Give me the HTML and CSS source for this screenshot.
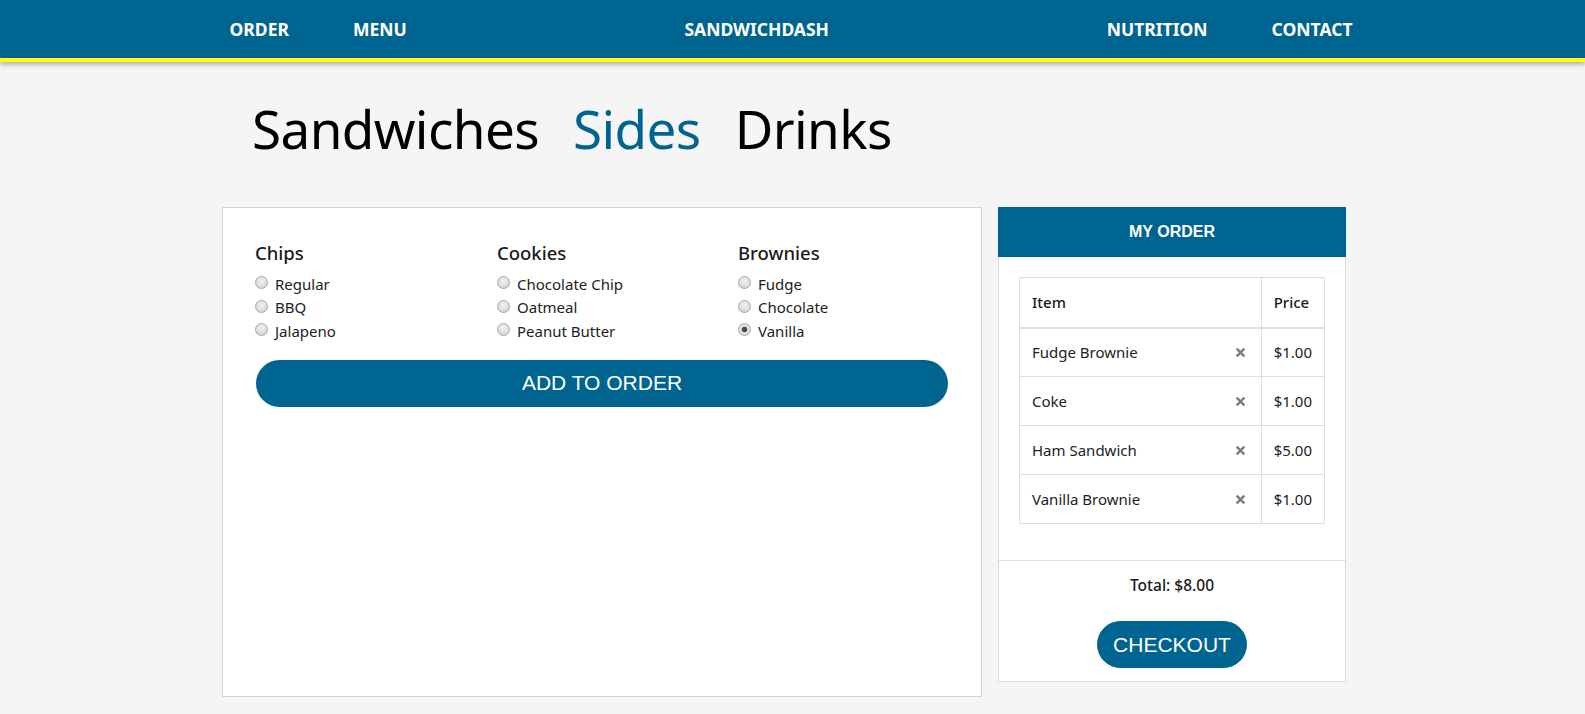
FILE: index.html
```html
<!DOCTYPE html>
<html lang="en">
<head>
<meta charset="utf-8">
<title>SandwichDash</title>
<link rel="stylesheet" href="styles.css">
</head>
<body>
<header class="topbar">
  <nav class="nav">
    <div class="nav-group">
      <a class="nav-link" href="#">ORDER</a>
      <a class="nav-link" href="#">MENU</a>
    </div>
    <div class="brand">SANDWICHDASH</div>
    <div class="nav-group">
      <a class="nav-link" href="#">NUTRITION</a>
      <a class="nav-link" href="#">CONTACT</a>
    </div>
  </nav>
</header>

<main class="page">
  <div class="tabs">
    <span class="tab">Sandwiches</span>
    <span class="tab tab-active">Sides</span>
    <span class="tab">Drinks</span>
  </div>

  <div class="content">
    <section class="menu-panel">
      <div class="options">
        <div class="group">
          <h3 class="group-title">Chips</h3>
          <label class="opt"><input class="radio" type="radio" name="chips">Regular</label>
          <label class="opt"><input class="radio" type="radio" name="chips">BBQ</label>
          <label class="opt"><input class="radio" type="radio" name="chips">Jalapeno</label>
        </div>
        <div class="group">
          <h3 class="group-title">Cookies</h3>
          <label class="opt"><input class="radio" type="radio" name="cookies">Chocolate Chip</label>
          <label class="opt"><input class="radio" type="radio" name="cookies">Oatmeal</label>
          <label class="opt"><input class="radio" type="radio" name="cookies">Peanut Butter</label>
        </div>
        <div class="group">
          <h3 class="group-title">Brownies</h3>
          <label class="opt"><input class="radio" type="radio" name="brownies">Fudge</label>
          <label class="opt"><input class="radio" type="radio" name="brownies">Chocolate</label>
          <label class="opt"><input class="radio" type="radio" name="brownies" checked>Vanilla</label>
        </div>
      </div>
      <button class="add-btn" type="button">ADD TO ORDER</button>
    </section>

    <aside class="order-panel">
      <div class="order-head">MY ORDER</div>
      <div class="order-body">
        <table class="order-table">
          <thead>
            <tr><th class="col-item">Item</th><th class="col-price">Price</th></tr>
          </thead>
          <tbody>
            <tr><td class="col-item"><span class="item-cell"><span>Fudge Brownie</span><svg class="rm" viewBox="0 0 10 10"><path d="M1.5 1.5L8.5 8.5M8.5 1.5L1.5 8.5"/></svg></span></td><td class="col-price">$1.00</td></tr>
            <tr><td class="col-item"><span class="item-cell"><span>Coke</span><svg class="rm" viewBox="0 0 10 10"><path d="M1.5 1.5L8.5 8.5M8.5 1.5L1.5 8.5"/></svg></span></td><td class="col-price">$1.00</td></tr>
            <tr><td class="col-item"><span class="item-cell"><span>Ham Sandwich</span><svg class="rm" viewBox="0 0 10 10"><path d="M1.5 1.5L8.5 8.5M8.5 1.5L1.5 8.5"/></svg></span></td><td class="col-price">$5.00</td></tr>
            <tr><td class="col-item"><span class="item-cell"><span>Vanilla Brownie</span><svg class="rm" viewBox="0 0 10 10"><path d="M1.5 1.5L8.5 8.5M8.5 1.5L1.5 8.5"/></svg></span></td><td class="col-price">$1.00</td></tr>
          </tbody>
        </table>
      </div>
      <div class="order-foot">
        <div class="total">Total: $8.00</div>
        <button class="checkout" type="button">CHECKOUT</button>
      </div>
    </aside>
  </div>
</main>
</body>
</html>
```

FILE: styles.css
```css
* { box-sizing: border-box; }

html, body {
  margin: 0;
  padding: 0;
}

body {
  background: #f5f5f5;
  font-family: "Noto Sans", "Open Sans", sans-serif;
  color: #222;
}

/* Top bar */
.topbar {
  background: #006491;
  border-bottom: 4px solid #ffff00;
  box-shadow: 0 3px 4px rgba(0, 0, 0, 0.25);
  position: relative;
}

.nav {
  width: 1190px;
  margin: 0 auto;
  padding-right: 3px;
  height: 58px;
  display: flex;
  align-items: center;
}

.nav-group {
  display: flex;
}

.nav-link {
  display: block;
  padding: 0 32px;
  line-height: 58px;
  color: #fff;
  text-decoration: none;
  font-weight: 700;
  font-size: 17.5px;
}

.brand {
  flex: 1;
  text-align: center;
  color: #fff;
  font-weight: 700;
  font-size: 17.5px;
}

/* Page */
.page {
  width: 1141px;
  margin: 0 auto;
}

.tabs {
  display: flex;
  gap: 34px;
  padding-left: 30px;
  margin-top: 35px;
  margin-bottom: 46px;
  height: 64px;
}

.tab {
  font-size: 53px;
  line-height: 64px;
  color: #000;
  letter-spacing: -0.6px;
}

.tab-active {
  color: #006491;
}

.content {
  display: flex;
  align-items: flex-start;
  gap: 16px;
}

/* Menu panel */
.menu-panel {
  width: 760px;
  height: 490px;
  background: #fff;
  border: 1px solid #d4d4d4;
  padding: 33px 32px;
}

.options {
  display: grid;
  grid-template-columns: 242px 241px 1fr;
}

.group-title {
  margin: 0 0 7px;
  font-size: 18.5px;
  line-height: 24px;
  font-weight: 500;
  color: #1a1a1a;
}

.opt {
  display: flex;
  align-items: center;
  height: 23.5px;
  font-size: 15px;
  color: #222;
}

.radio {
  -webkit-appearance: none;
  appearance: none;
  width: 13px;
  height: 13px;
  margin: 0 7px 0 0;
  border-radius: 50%;
  border: 1px solid #a8a8a8;
  background: radial-gradient(circle at 50% 35%, #f2f2f2 0%, #dcdcdc 60%, #c9c9c9 100%);
  flex: none;
  position: relative;
  top: -1px;
}

.radio:checked {
  background: radial-gradient(circle, #4a4a4a 0, #4a4a4a 2.4px, #e4e4e4 3.2px, #d4d4d4 100%);
}

.add-btn {
  display: block;
  width: 692px;
  height: 47px;
  margin: 17px 0 0 1px;
  border: 0;
  border-radius: 24px;
  background: #006491;
  color: #fff;
  font-family: "Liberation Sans", Arial, sans-serif;
  font-size: 21px;
}

/* Order panel */
.order-panel {
  width: 348px;
  background: #fff;
  border: 1px solid #dcdcdc;
}

.order-head {
  height: 50px;
  margin: -1px -1px 0;
  background: #006491;
  color: #fff;
  font-family: "Liberation Sans", Arial, sans-serif;
  font-weight: 700;
  font-size: 16px;
  display: flex;
  align-items: center;
  justify-content: center;
}

.order-body {
  padding: 20px 20px 36px;
}

.order-table {
  width: 100%;
  border-collapse: collapse;
  border: 1px solid #dddddd;
  font-size: 15px;
}

.order-table th,
.order-table td {
  border: 1px solid #dddddd;
  text-align: left;
  padding: 0 12px;
  height: 49px;
}

.order-table th {
  font-weight: 500;
  height: 50px;
  border-bottom: 2px solid #dddddd;
  color: #1a1a1a;
}

.col-item {
  width: 244px;
}

.order-table td.col-item {
  padding-right: 15px;
}

.item-cell {
  display: flex;
  align-items: center;
  justify-content: space-between;
}

.rm {
  width: 11px;
  height: 11px;
  stroke: #7a7a7a;
  stroke-width: 2.1;
  fill: none;
}

.order-foot {
  border-top: 1px solid #dddddd;
  padding: 14px 0 13px;
  text-align: center;
}

.total {
  font-size: 15.5px;
  line-height: 20px;
  font-weight: 500;
  color: #1a1a1a;
}

.checkout {
  display: inline-block;
  margin-top: 26px;
  width: 150px;
  height: 47px;
  border: 0;
  border-radius: 24px;
  background: #006491;
  color: #fff;
  font-family: "Liberation Sans", Arial, sans-serif;
  font-size: 21px;
}
```
